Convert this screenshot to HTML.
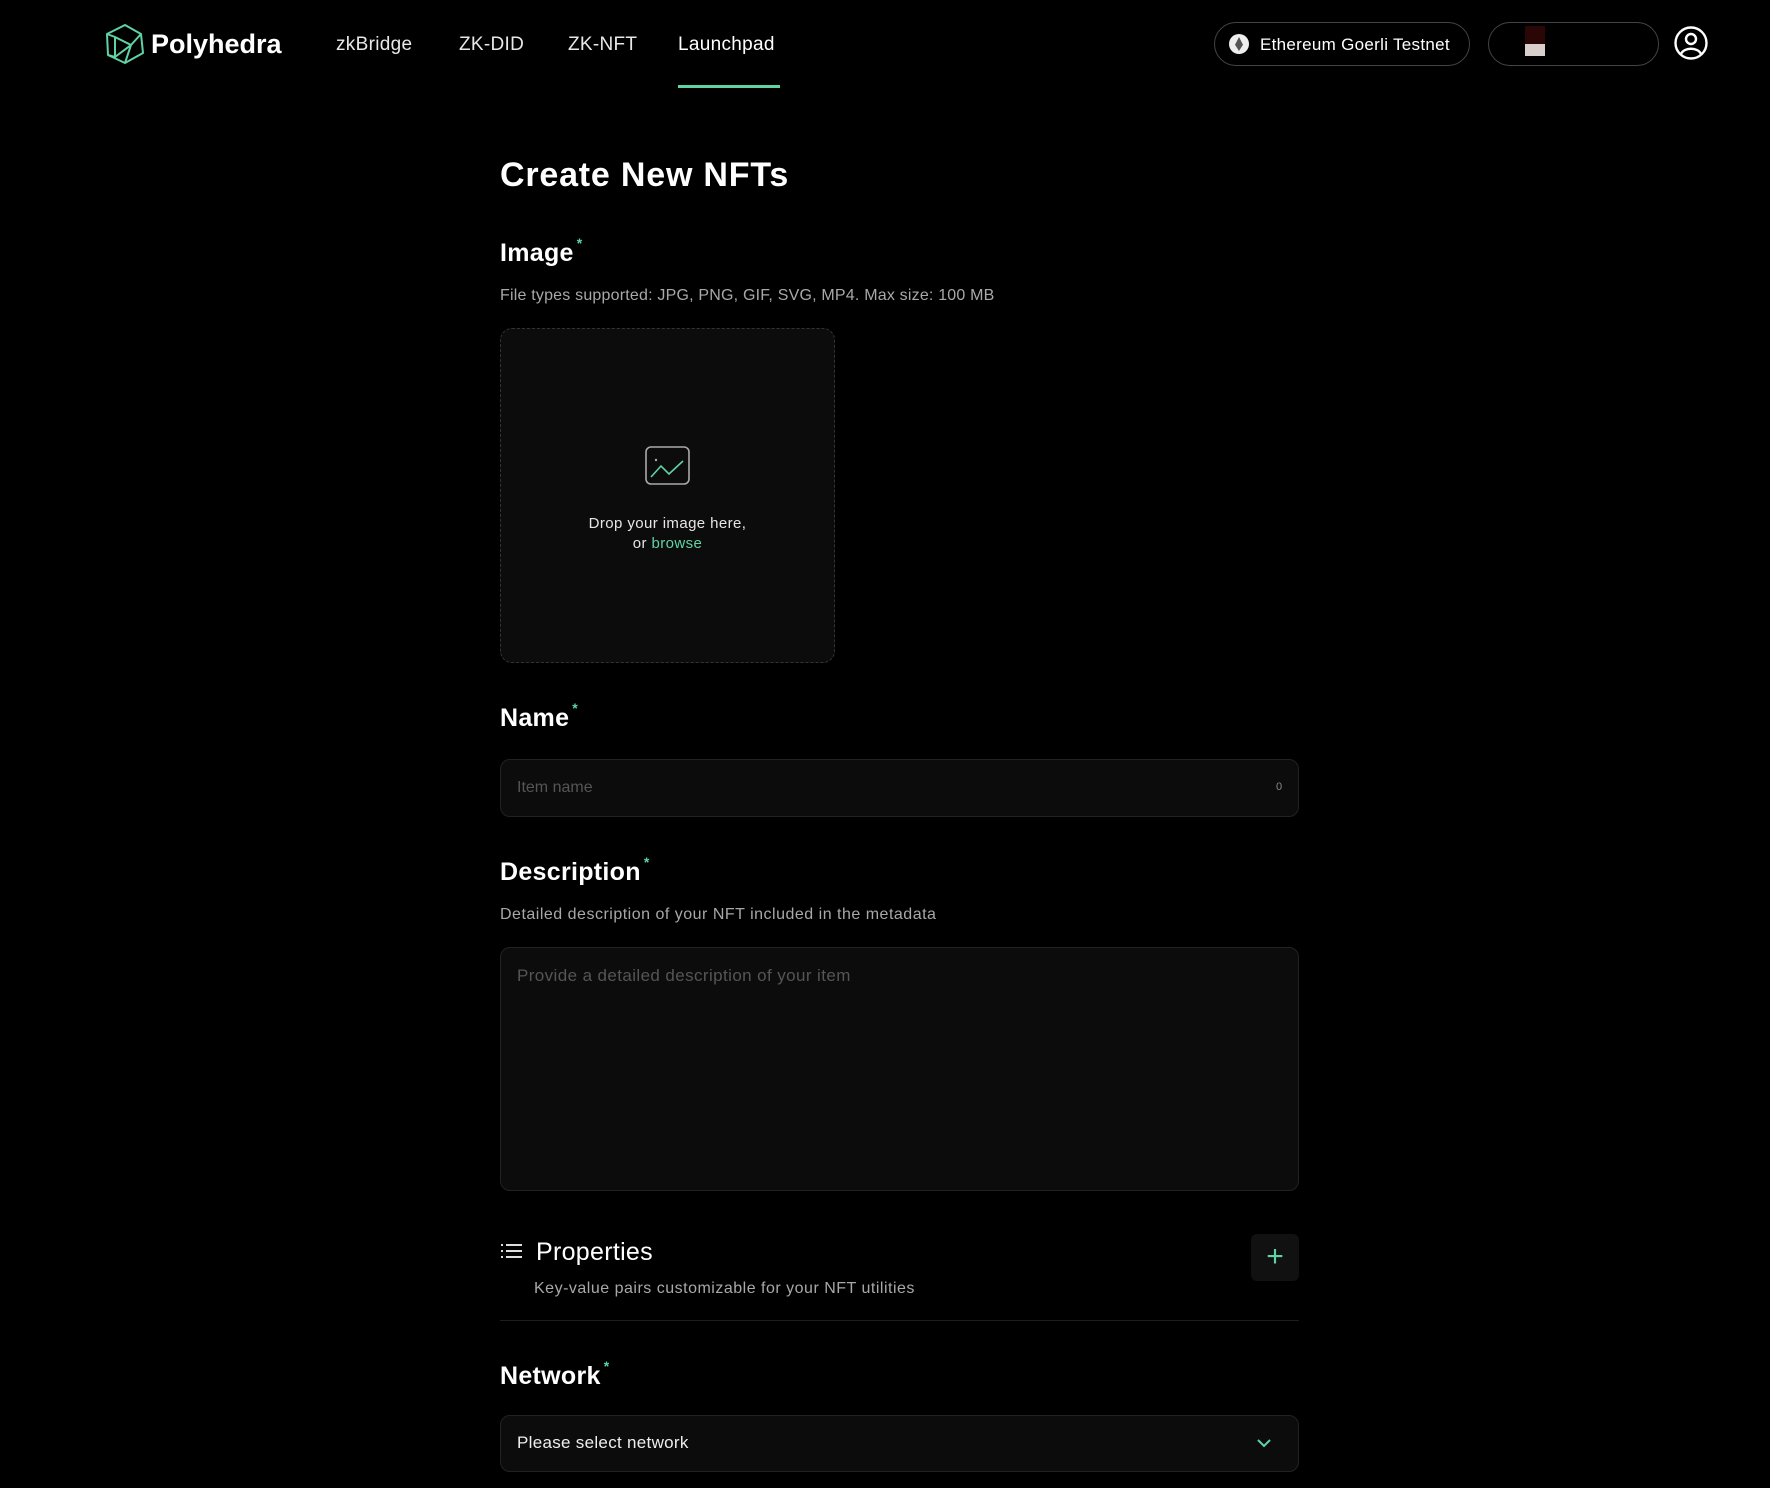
<!DOCTYPE html>
<html><head><meta charset="utf-8"><style>
*{box-sizing:border-box;margin:0;padding:0}
body{width:1770px;height:1488px;background:#000;color:#fff;font-family:"Liberation Sans",sans-serif;position:relative;overflow:hidden}
.a{position:absolute;white-space:nowrap}
.nav{font-size:19px;color:#e8e8e8;top:34px;letter-spacing:0.3px}
.h2{font-size:25px;font-weight:600;left:500px;letter-spacing:0.3px}
.h2 sup{color:#5fd3a4;font-size:14px;vertical-align:top;position:relative;top:-4px;margin-left:3px}
.sub{font-size:16px;color:#a8a8a8;left:500px;letter-spacing:0.2px}
.box{position:absolute;background:#0c0c0c;border:1px solid #222;border-radius:10px}
</style></head><body>
<svg class="a" style="left:105px;top:23px" width="40" height="42" viewBox="0 0 40 42" fill="none" stroke="#5fd3a4" stroke-width="2" stroke-linejoin="round"><path d="M20 2 L36 11 L38 30 L20 40 L3 32 L2 11 Z"/><path d="M2 11 L10 14 L10 34 L3 32 M10 14 L26 22 L10 34 M26 22 L36 11 M26 22 L20 40"/></svg>
<div class="a" style="left:151px;top:29px;font-size:27px;font-weight:600">Polyhedra</div>
<div class="a nav" style="left:336px">zkBridge</div>
<div class="a nav" style="left:459px">ZK-DID</div>
<div class="a nav" style="left:568px">ZK-NFT</div>
<div class="a nav" style="left:678px;color:#fff">Launchpad</div>
<div class="a" style="left:678px;top:85px;width:102px;height:3px;background:#5fd3a4"></div>
<div class="a" style="left:1214px;top:22px;width:256px;height:44px;border:1px solid #444;border-radius:22px"></div>
<div class="a" style="left:1229px;top:34px;width:20px;height:20px;border-radius:50%;background:#eee"></div>
<div class="a" style="left:1235px;top:37px;width:8px;height:14px;background:#555;clip-path:polygon(50% 0,100% 55%,50% 100%,0 55%)"></div>
<div class="a" style="left:1260px;top:35px;font-size:17px;font-weight:500;letter-spacing:0.3px">Ethereum Goerli Testnet</div>
<div class="a" style="left:1488px;top:22px;width:171px;height:44px;border:1px solid #444;border-radius:22px"></div>
<div class="a" style="left:1525px;top:44px;width:20px;height:12px;background:#d8cfcc"></div>
<div class="a" style="left:1525px;top:26px;width:20px;height:18px;background:#2a0606"></div>
<svg class="a" style="left:1674px;top:26px" width="34" height="34" viewBox="0 0 34 34" fill="none" stroke="#fff" stroke-width="2.4"><circle cx="17" cy="17" r="15.5"/><circle cx="17" cy="13" r="5"/><path d="M7 28 C10 21 24 21 27 28"/></svg>
<div class="a" style="left:500px;top:156px;font-size:34px;font-weight:700;letter-spacing:0.8px">Create New NFTs</div>
<div class="a h2" style="top:239px">Image<sup>*</sup></div>
<div class="a sub" style="top:287px">File types supported: JPG, PNG, GIF, SVG, MP4. Max size: 100 MB</div>
<div class="box" style="left:500px;top:328px;width:335px;height:335px;border:1px dashed #333;border-radius:12px"></div>
<svg class="a" style="left:645px;top:446px" width="45" height="40" viewBox="0 0 45 40" fill="none" stroke-width="1.6"><rect x="1" y="1" width="43" height="37" rx="5" stroke="#aaa"/><circle cx="11" cy="14" r="1.2" fill="#aaa" stroke="none"/><path d="M6 31 L16 20 L24 28 L38 15" stroke="#5fd3a4"/></svg>
<div class="a" style="left:500px;width:335px;text-align:center;top:514px;font-size:15px;line-height:20px;color:#e6e6e6;letter-spacing:0.4px">Drop your image here,<br>or <span style="color:#5fd3a4">browse</span></div>
<div class="a h2" style="top:704px">Name<sup>*</sup></div>
<div class="box" style="left:500px;top:759px;width:799px;height:58px"></div>
<div class="a" style="left:517px;top:779px;font-size:16px;color:#555">Item name</div>
<div class="a" style="left:1276px;top:781px;font-size:11px;color:#888">0</div>
<div class="a h2" style="top:858px">Description<sup>*</sup></div>
<div class="a sub" style="top:906px;letter-spacing:0.5px">Detailed description of your NFT included in the metadata</div>
<div class="box" style="left:500px;top:947px;width:799px;height:244px"></div>
<div class="a" style="left:517px;top:966px;font-size:17px;color:#555;letter-spacing:0.4px">Provide a detailed description of your item</div>
<svg class="a" style="left:501px;top:1243px" width="22" height="16" viewBox="0 0 22 16" fill="#ddd"><rect x="0" y="1" width="2" height="2"/><rect x="5" y="1" width="16" height="2"/><rect x="0" y="7" width="2" height="2"/><rect x="5" y="7" width="16" height="2"/><rect x="0" y="13" width="2" height="2"/><rect x="5" y="13" width="16" height="2"/></svg>
<div class="a" style="left:536px;top:1238px;font-size:25px;font-weight:500;letter-spacing:0.3px">Properties</div>
<div class="a sub" style="left:534px;top:1280px;font-size:16px;letter-spacing:0.5px">Key-value pairs customizable for your NFT utilities</div>
<div class="a" style="left:1251px;top:1234px;width:48px;height:47px;background:#111;border-radius:6px;color:#5fd3a4;font-size:30px;text-align:center;line-height:46px">+</div>
<div class="a" style="left:500px;top:1320px;width:799px;height:1px;background:#1e1e1e"></div>
<div class="a h2" style="top:1362px">Network<sup>*</sup></div>
<div class="box" style="left:500px;top:1415px;width:799px;height:57px"></div>
<div class="a" style="left:517px;top:1433px;font-size:17px;color:#eee;letter-spacing:0.3px">Please select network</div>
<svg class="a" style="left:1256px;top:1437px" width="16" height="12" viewBox="0 0 16 12" fill="none" stroke="#5fd3a4" stroke-width="2"><path d="M2 3 L8 9 L14 3"/></svg>
</body></html>
